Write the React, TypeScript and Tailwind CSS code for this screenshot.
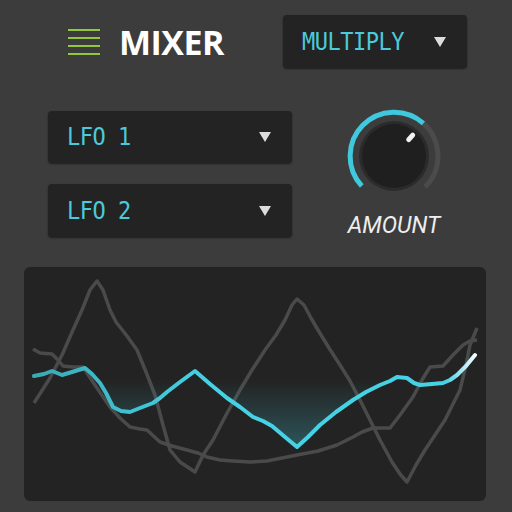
import React from "react";

const gray1 =
  "M34,403 L50,378 L62,355 L73,330 L82,310 L90,290 L97,281 L103,290 L110,310 L116,322 L127,336 L137,350 L146,372 L155,395 L163,425 L170,450 L180,462 L195,472 L203,455 L213,440 L226,415 L240,390 L252,370 L265,350 L276,335 L285,320 L292,305 L297,299 L304,305 L311,318 L318,330 L329,348 L340,365 L350,381 L360,400 L370,420 L380,440 L392,462 L400,474 L407,482 L416,465 L425,450 L435,435 L445,420 L452,406 L460,390 L466,365 L470,345 L477,328";

const gray2 =
  "M33,349 L40,353 L52,354 L58,360 L63,366 L73,367 L83,367 L95,385 L110,407 L120,418 L130,427 L140,429 L147,430 L160,442 L172,446 L187,450 L198,453 L207,457 L220,460 L233,461 L250,462 L267,461 L282,458 L297,455 L318,451 L337,445 L353,437 L362,432 L373,428 L390,428 L400,415 L413,397 L422,380 L430,367 L443,366 L453,355 L463,345 L470,341 L477,340";

const cyan =
  "M34,376 L44,374 L52,371 L62,375 L72,372 L85,368 L92,374 L100,383 L106,393 L113,407 L121,411 L130,412 L140,408 L153,403 L160,398 L167,392 L180,382 L195,371 L210,384 L227,398 L240,407 L253,417 L263,421 L272,426 L285,437 L297,447 L308,437 L320,425 L336,412 L353,400 L366,392 L380,385 L390,381 L397,377 L407,378 L414,383 L420,385 L432,384 L443,383 L450,380 L457,375 L466,366 L475,355";

const Caret = () => (
  <svg width="12" height="10" viewBox="0 0 12 10">
    <path d="M0,0 L12,0 L6,10 Z" fill="#dcdcdc" />
  </svg>
);

const Select = ({ label, className }: { label: string; className: string }) => (
  <div
    className={`flex items-center justify-between rounded bg-[#232323] shadow-[0_1px_2px_rgba(0,0,0,0.5)] ${className}`}
  >
    <span className="font-['DejaVu_Sans_Mono',monospace] text-[22px] leading-none text-[#4ccadb] tracking-[-0.5px] scale-y-[1.15]">
      {label}
    </span>
    <Caret />
  </div>
);

const Knob = () => (
  <svg width="100" height="100" viewBox="0 0 100 100">
    <path d="M79.4,17.3 A44,44 0 0 1 81.1,81.1" fill="none" stroke="#4b4b4b" strokeWidth="5" />
    <path d="M17.8,80 A44,44 0 0 1 79.4,17.3" fill="none" stroke="#40c8dc" strokeWidth="5" />
    <circle cx="50" cy="50" r="35" fill="#2b2b2b" />
    <circle cx="50" cy="50" r="32" fill="#1f1f1f" />
    <line x1="64.7" y1="33.7" x2="68.7" y2="29.2" stroke="#f2f2f2" strokeWidth="5" strokeLinecap="round" />
  </svg>
);

const App: React.FC = () => {
  return (
    <div className="w-[512px] h-[512px] bg-[#3c3c3c] flex flex-col overflow-hidden">
      {/* header */}
      <div className="flex items-center pt-[15px] pl-[68px] pr-[45px]">
        <div className="flex flex-col gap-[6px] w-[32px]">
          <div className="h-[2px] bg-[#94c83c]" />
          <div className="h-[2px] bg-[#94c83c]" />
          <div className="h-[2px] bg-[#94c83c]" />
          <div className="h-[2px] bg-[#94c83c]" />
        </div>
        <span className="ml-[19px] font-['Open_Sans',sans-serif] font-bold text-[34px] leading-none text-white tracking-[-0.5px]">
          MIXER
        </span>
        <Select label="MULTIPLY" className="ml-auto w-[184px] h-[53px] pl-[19px] pr-[21px]" />
      </div>

      {/* controls */}
      <div className="flex mt-[43px] pl-[48px]">
        <div className="flex flex-col gap-[21px] w-[244px]">
          <Select label="LFO 1" className="h-[52px] pl-[19px] pr-[21px]" />
          <Select label="LFO 2" className="h-[53px] pl-[19px] pr-[21px]" />
        </div>
        <div className="flex flex-col items-center ml-[52px] -mt-[5px]">
          <Knob />
          <span className="mt-[8px] font-['Roboto',sans-serif] italic text-[23px] leading-none text-[#eeeeee]">
            AMOUNT
          </span>
        </div>
      </div>

      {/* wave display */}
      <div className="mt-[30px] ml-[24px] w-[462px] h-[234px] rounded-md bg-[#232323] overflow-hidden">
        <svg width="462" height="234" viewBox="24 267 462 234">
          <defs>
            <linearGradient id="fill" gradientUnits="userSpaceOnUse" x1="0" y1="380" x2="0" y2="450">
              <stop offset="0" stopColor="#3fb8c6" stopOpacity="0" />
              <stop offset="1" stopColor="#3fb8c6" stopOpacity="0.35" />
            </linearGradient>
            <linearGradient id="line" gradientUnits="userSpaceOnUse" x1="34" y1="0" x2="477" y2="0">
              <stop offset="0" stopColor="#3aa9b4" />
              <stop offset="0.22" stopColor="#3fc2d2" />
              <stop offset="0.4" stopColor="#45d2e4" />
              <stop offset="0.93" stopColor="#45d2e4" />
              <stop offset="1" stopColor="#ffffff" />
            </linearGradient>
          </defs>
          <path d={gray1} fill="none" stroke="#4a4a4a" strokeWidth="3.5" strokeLinejoin="round" />
          <path d={gray2} fill="none" stroke="#4a4a4a" strokeWidth="3.5" strokeLinejoin="round" />
          <path d={`${cyan} L475,380 L34,380 Z`} fill="url(#fill)" />
          <path d={cyan} fill="none" stroke="url(#line)" strokeWidth="4" strokeLinejoin="round" strokeLinecap="round" />
        </svg>
      </div>
    </div>
  );
};

export default App;
